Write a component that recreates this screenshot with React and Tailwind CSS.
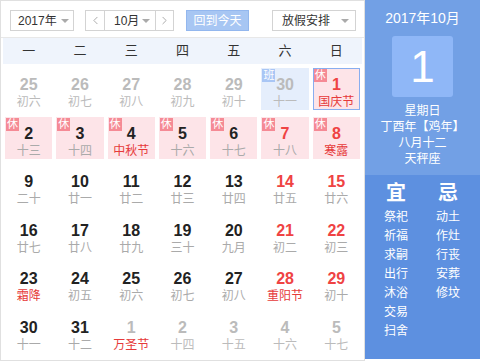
import { ChevronLeft, ChevronRight } from 'lucide-react';

const font = { fontFamily: '"Liberation Sans", "Noto Sans CJK SC", sans-serif' };

const weeks = ['一', '二', '三', '四', '五', '六', '日'];

// d: day, l: lunar/festival, o: other month, w: weekend(red num), f: festival(red lunar), tag: 休/班
const rows = [
  [
    { d: 25, l: '初六', o: true }, { d: 26, l: '初七', o: true }, { d: 27, l: '初八', o: true },
    { d: 28, l: '初九', o: true }, { d: 29, l: '初十', o: true },
    { d: 30, l: '十一', o: true, tag: '班' },
    { d: 1, l: '国庆节', w: true, f: true, tag: '休', today: true },
  ],
  [
    { d: 2, l: '十三', tag: '休' }, { d: 3, l: '十四', tag: '休' }, { d: 4, l: '中秋节', f: true, tag: '休' },
    { d: 5, l: '十六', tag: '休' }, { d: 6, l: '十七', tag: '休' }, { d: 7, l: '十八', w: true, tag: '休' },
    { d: 8, l: '寒露', w: true, f: true, tag: '休' },
  ],
  [
    { d: 9, l: '二十' }, { d: 10, l: '廿一' }, { d: 11, l: '廿二' }, { d: 12, l: '廿三' },
    { d: 13, l: '廿四' }, { d: 14, l: '廿五', w: true }, { d: 15, l: '廿六', w: true },
  ],
  [
    { d: 16, l: '廿七' }, { d: 17, l: '廿八' }, { d: 18, l: '廿九' }, { d: 19, l: '三十' },
    { d: 20, l: '九月' }, { d: 21, l: '初二', w: true }, { d: 22, l: '初三', w: true },
  ],
  [
    { d: 23, l: '霜降', f: true }, { d: 24, l: '初五' }, { d: 25, l: '初六' }, { d: 26, l: '初七' },
    { d: 27, l: '初八' }, { d: 28, l: '重阳节', w: true, f: true }, { d: 29, l: '初十', w: true },
  ],
  [
    { d: 30, l: '十一' }, { d: 31, l: '十二' }, { d: 1, l: '万圣节', o: true, f: true },
    { d: 2, l: '十四', o: true }, { d: 3, l: '十五', o: true }, { d: 4, l: '十六', o: true },
    { d: 5, l: '十七', o: true },
  ],
];

const yi = ['祭祀', '祈福', '求嗣', '出行', '沐浴', '交易', '扫舍'];
const ji = ['动土', '作灶', '行丧', '安葬', '修坟'];

function Caret() {
  return <span className="w-0 h-0 border-x-[4px] border-x-transparent border-t-[4px] border-t-[#aaa]" />;
}

function Cell({ c }) {
  let box = 'border border-transparent';
  if (c.tag === '班') box = 'bg-[#e5eefc] border border-transparent';
  else if (c.today) box = 'bg-[#fde4e8] border border-[#88aef0]';
  else if (c.tag === '休') box = 'bg-[#fde4e8] border border-transparent';

  const num = c.w && !c.o ? 'text-[#ef4343]' : c.o ? 'text-[#bbbbbb]' : 'text-[#222]';
  const lun = c.f ? 'text-[#e63a3a]' : c.o ? 'text-[#bbbbbb]' : 'text-[#aaaaaa]';

  return (
    <div className="h-[48.6px] px-[2px] pt-[2px]">
      <div className={`relative h-[42px] flex flex-col items-center ${box}`}>
        {c.tag && (
          <span
            className={`absolute left-0 top-0 w-[13px] h-[13px] flex items-center justify-center text-[11px] leading-none text-white ${
              c.tag === '班' ? 'bg-[#a9c6f5]' : 'bg-[#f58a95]'
            }`}
          >
            {c.tag}
          </span>
        )}
        <span className={`mt-[6px] text-[16px] leading-[19px] font-bold ${num}`}>{c.d}</span>
        <span className={`text-[12px] leading-[16px] ${lun}`}>{c.l}</span>
      </div>
    </div>
  );
}

export default function App() {
  return (
    <div className="w-[480px] h-[362px] flex bg-white" style={font}>
      <div className="w-[365px] h-[361px] border border-[#e0e0e0] flex flex-col">
        <div className="h-[37px] shrink-0 flex items-start pt-[9px] pl-[9px] border-b border-[#e8e8e8] text-[12px] text-[#333]">
          <div className="w-[64px] h-[21px] border border-[#d3d3d3] flex items-center justify-between pl-[7px] pr-[4px]">
            <span>2017年</span>
            <Caret />
          </div>
          <div className="ml-[11px] h-[21px] w-[89px] border border-[#d3d3d3] flex">
            <div className="w-[19px] flex items-center justify-center border-r border-[#d3d3d3] text-[#999]">
              <ChevronLeft size={13} strokeWidth={1.5} />
            </div>
            <div className="flex-1 flex items-center justify-between pl-[9px] pr-[5px] border-r border-[#d3d3d3]">
              <span>10月</span>
              <Caret />
            </div>
            <div className="w-[17px] flex items-center justify-center text-[#999]">
              <ChevronRight size={13} strokeWidth={1.5} />
            </div>
          </div>
          <div className="ml-[12px] w-[63px] h-[21px] bg-[#a7c6f3] border border-[#93b7ee] text-white flex items-center justify-center">
            回到今天
          </div>
          <div className="ml-[23px] w-[84px] h-[21px] border border-[#d3d3d3] flex items-center justify-between pl-[9px] pr-[6px]">
            <span>放假安排</span>
            <Caret />
          </div>
        </div>

        <div className="px-[2px]">
          <div className="grid grid-cols-7 h-[26px] bg-[#eff4fc] text-[13px] text-[#333]">
            {weeks.map((w) => (
              <div key={w} className="flex items-center justify-center">{w}</div>
            ))}
          </div>
          <div className="pt-[2px]">
            {rows.map((r, i) => (
              <div key={i} className="grid grid-cols-7">
                {r.map((c, j) => (
                  <Cell key={j} c={c} />
                ))}
              </div>
            ))}
          </div>
        </div>
      </div>

      <div className="w-[115px] h-[359px] flex flex-col text-white">
        <div className="h-[175px] bg-[#72a0e5] flex flex-col items-center">
          <div className="mt-[9px] text-[14px] leading-[18px]">2017年10月</div>
          <div className="mt-[9px] w-[61px] h-[61px] rounded-[3px] bg-[#8fb7f7] flex items-center justify-center text-[44px] font-light leading-none">
            1
          </div>
          <div className="mt-[6px] text-[12px] leading-[16px] text-center">
            <div>星期日</div>
            <div>丁酉年【鸡年】</div>
            <div>八月十二</div>
            <div>天秤座</div>
          </div>
        </div>
        <div className="flex-1 bg-[#5d90e0] flex pt-[6px] text-[12px]">
          <div className="w-[62px] flex flex-col items-center">
            <div className="text-[20px] font-bold leading-[24px] mb-[3px]">宜</div>
            {yi.map((t) => (
              <div key={t} className="leading-[19px]">{t}</div>
            ))}
          </div>
          <div className="w-[42px] flex flex-col items-center">
            <div className="text-[20px] font-bold leading-[24px] mb-[3px]">忌</div>
            {ji.map((t) => (
              <div key={t} className="leading-[19px]">{t}</div>
            ))}
          </div>
        </div>
      </div>
    </div>
  );
}
